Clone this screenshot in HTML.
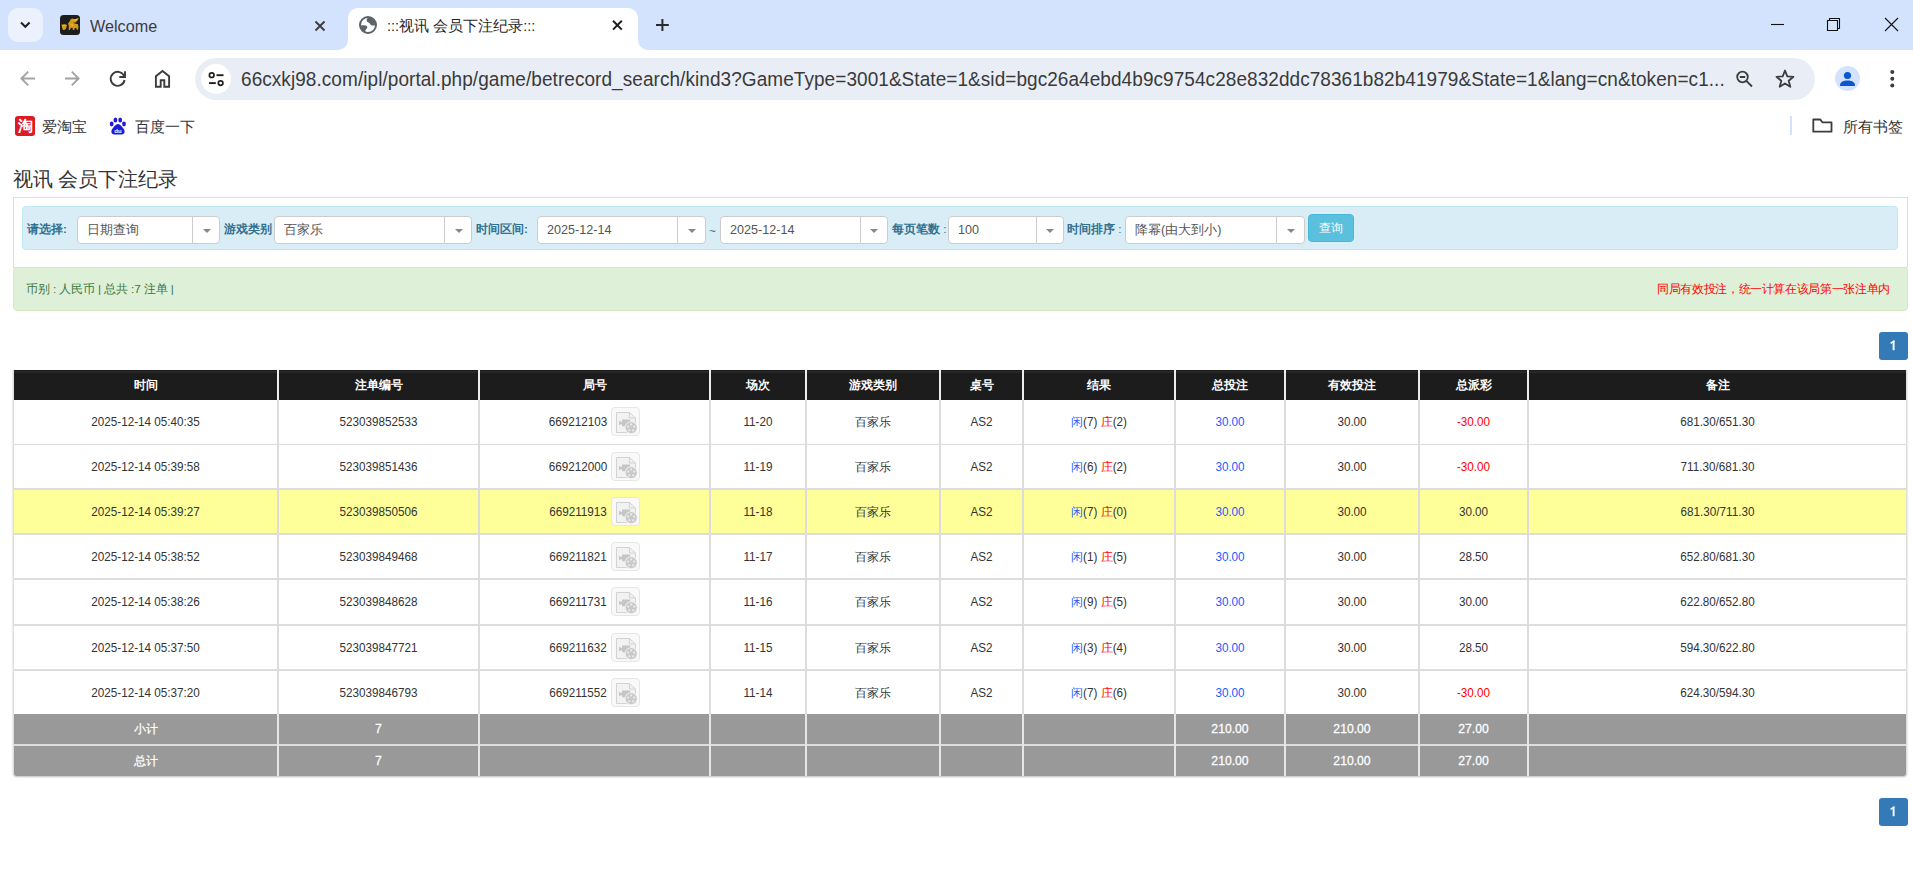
<!DOCTYPE html>
<html><head><meta charset="utf-8">
<style>
*{box-sizing:border-box;margin:0;padding:0}
html,body{width:1913px;height:885px;overflow:hidden;background:#fff;font-family:"Liberation Sans",sans-serif;color:#333}
.abs{position:absolute}
.nw{white-space:nowrap}
/* chrome */
#tabstrip{position:absolute;left:0;top:0;width:1913px;height:50px;background:#d3e3fd}
#ddbtn{position:absolute;left:8px;top:8px;width:35px;height:34px;border-radius:10px;background:#ebf2fe}
#tab2{position:absolute;left:348px;top:8px;width:290px;height:42px;background:#fff;border-radius:10px 10px 0 0}
#tab2:before,#tab2:after{content:"";position:absolute;bottom:0;width:10px;height:10px;background:transparent}
#tab2:before{left:-10px;border-bottom-right-radius:10px;box-shadow:4px 4px 0 4px #fff}
#tab2:after{right:-10px;border-bottom-left-radius:10px;box-shadow:-4px 4px 0 4px #fff}
.tabtxt{position:absolute;top:15px;font-size:15px;line-height:20px;color:#444;white-space:nowrap}
#omni{position:absolute;left:195px;top:58px;width:1620px;height:42px;border-radius:21px;background:#e9eef6}
#tunebg{position:absolute;left:201px;top:64px;width:30px;height:30px;border-radius:15px;background:#fff}
#url{position:absolute;left:241px;top:67px;font-size:19px;line-height:24px;color:#3a3a3a;white-space:nowrap;letter-spacing:0.06px;transform:scaleY(1.09);transform-origin:0 5px}
.bm{position:absolute;top:116.5px;font-size:15px;line-height:20px;color:#333;white-space:nowrap}
/* page */
#title{position:absolute;left:12.5px;top:167px;font-size:20px;line-height:24px;color:#333;white-space:nowrap}
#well{position:absolute;left:13px;top:197px;width:1895px;height:71px;border:1px solid #ddd}
#info{position:absolute;left:22px;top:206px;width:1876px;height:44px;background:#d9edf7;border:1px solid #bce8f1;border-radius:4px}
.lbl{position:absolute;top:222px;font-size:11.7px;line-height:14px;font-weight:bold;color:#31708f;white-space:nowrap}
.sel{position:absolute;top:216px;height:28px;background:#fff;border:1px solid #ccc;border-radius:4px}
.sel .v{position:absolute;left:9px;top:6px;font-size:12.6px;line-height:14px;color:#555;white-space:nowrap}
.sel .dv{position:absolute;top:0;bottom:0;width:1px;background:#ccc}
.sel .ar{position:absolute;top:11.5px;width:0;height:0;border-left:4px solid transparent;border-right:4px solid transparent;border-top:4px solid #888}
#btn{position:absolute;left:1308px;top:214px;width:46px;height:28px;background:#5bc0de;border:1px solid #46b8da;border-radius:4px;color:#fff;font-size:11.7px;line-height:26px;text-align:center}
#succ{position:absolute;left:13px;top:267px;width:1895px;height:44px;background:#dff0d8;border:1px solid #d6e9c6;border-radius:4px}
#succ .l{position:absolute;left:12px;top:14px;font-size:11.7px;letter-spacing:-0.1px;line-height:14px;color:#3c763d;white-space:nowrap}
#succ .r{position:absolute;right:17px;top:13.5px;font-size:11.6px;letter-spacing:-0.35px;line-height:14px;color:#f00;white-space:nowrap}
.pg{position:absolute;left:1879px;width:29px;height:28px;background:#337ab7;border-radius:3px;color:#fff;font-size:12.6px;line-height:27px;text-align:center;-webkit-text-stroke:0.5px #fff}
/* table */
#tbl{position:absolute;left:0;top:0;width:0;height:0}
#tblshadow{position:absolute;left:13px;top:370px;width:1894px;height:406px;box-shadow:0 1px 2px rgba(0,0,0,.25);border-radius:0 0 4px 4px;background:#ddd}
.t{position:absolute;text-align:center;font-size:11.7px;white-space:nowrap;color:#333}
.th{color:#fff;font-weight:bold}
.ts{color:#fff;font-size:12.2px;-webkit-text-stroke:0.25px #fff}
.n{display:inline-block;transform:scaleY(1.1);transform-origin:50% calc(50% + 4px)}
.bl{color:#1a5cff}
.rd{color:#f00}
.vi{display:inline-block;vertical-align:middle;width:29px;height:29px;margin-left:4px;border:1px solid #e6e6e6;border-radius:4px;background:#f9f9f9;position:relative;top:-1px}
.vi svg{position:absolute;left:3px;top:2.5px}
</style></head><body>

<div id="tabstrip"></div>
<div id="ddbtn"></div>
<div id="tab2"></div>
<div id="omni"></div>
<div id="tunebg"></div>
<div class="abs" style="left:1835px;top:66px;width:25px;height:25px;border-radius:13px;background:#d3e3fd"></div>
<div class="abs" style="left:15px;top:116px;width:20px;height:20px;border-radius:3px;background:#dc1b24"></div>
<div class="abs" style="left:15px;top:116px;width:20px;height:20px;color:#fff;font-size:15px;line-height:20px;text-align:center;font-weight:bold">淘</div>
<div class="abs" style="left:1790px;top:116px;width:2px;height:19px;background:#d3e3fd"></div>
<svg class="abs" style="left:0;top:0" width="1913" height="150" viewBox="0 0 1913 150">
<path d="M21 22.5 L25.3 26.8 L29.6 22.5" fill="none" stroke="#1f1f1f" stroke-width="2"/>
<rect x="60" y="15" width="20" height="20" rx="3.5" fill="#1d1d1d"/>
<g fill="#d49a1a">
<path d="M70.5 19.5 L72.5 18.2 L74 19.8 L79 18 L77.5 20.5 L75.5 22.5 L72.5 22.8 L70.8 21.5 Z"/>
<path d="M69.5 21.5 L71 19.5 L72.5 21.5 L74.5 23.5 L77.8 24 L78.5 26.5 L78 29.8 L76.8 29.8 L76.3 27.8 L74.8 28 L74.2 30 L72.8 30 L72.6 27.8 L70.6 28 L70 30 L68.7 30 L68.8 26 L68 23.5 Z"/>
<path d="M61.5 24.5 L66 24.2 L67 25.5 L66 28.5 L64.5 30 L63 30 L62 27.5 Z"/>
</g>
<g fill="#f0c040"><path d="M73 19.5 L78 18.4 L76.5 20.2 L74 20.8 Z"/><path d="M70.5 24 L73.5 24.5 L72.5 26 Z"/><path d="M62.5 25 L65.5 25 L64 26.5 Z"/></g>
<path d="M315.5 21.5 L324.5 30.5 M324.5 21.5 L315.5 30.5" stroke="#3c3c3c" stroke-width="1.9"/>
<circle cx="368" cy="25" r="8" fill="none" stroke="#5f6368" stroke-width="2"/>
<path d="M368.5 17.2 C367 18.5 366.3 19.5 366.8 21 C367.5 22.8 369.5 22.5 370.2 24 C370.8 25.2 372 25.8 374 25.5 L375.9 25 A8 8 0 0 0 368.5 17.2 Z" fill="#5f6368"/>
<path d="M360.1 25.5 L364.5 25.3 C366.3 25.3 367.5 26.3 367.3 27.5 C367.1 28.8 365.8 29.3 365.3 30.5 L365.3 32.3 A8 8 0 0 1 360.1 25.5 Z" fill="#5f6368"/>
<path d="M613 20.8 L621.8 29.6 M621.8 20.8 L613 29.6" stroke="#1f1f1f" stroke-width="2"/>
<path d="M662.4 19 V30.9 M656 25 H668.8" stroke="#2a2a2a" stroke-width="2"/>
<path d="M1771 24.5 H1784" stroke="#111" stroke-width="1.1"/>
<path d="M1827.5 20.5 H1837.5 V30.5 H1827.5 Z" fill="none" stroke="#111" stroke-width="1.1"/>
<path d="M1829.5 20.5 V18.5 H1839.5 V28.5 H1837.5" fill="none" stroke="#111" stroke-width="1.1"/>
<path d="M1885 18 L1898 31 M1898 18 L1885 31" stroke="#111" stroke-width="1.1"/>
<path d="M35 78.5 H21.5 M28.2 71.7 L21.4 78.5 L28.2 85.3" fill="none" stroke="#a3a3a3" stroke-width="1.9"/>
<path d="M65 78.5 H78.5 M71.8 71.7 L78.6 78.5 L71.8 85.3" fill="none" stroke="#a3a3a3" stroke-width="1.9"/>
<path d="M124.3 76.5 A7 7 0 1 0 124.6 80" fill="none" stroke="#3c3c3c" stroke-width="1.9"/>
<path d="M125 71.2 V77 H119.3" fill="none" stroke="#3c3c3c" stroke-width="1.9"/>
<path d="M155.9 86.7 V76.3 L162.5 71 L169.1 76.3 V86.7 H164.3 V80.2 H160.7 V86.7 Z" fill="none" stroke="#3c3c3c" stroke-width="1.9" stroke-linejoin="miter"/>
<circle cx="211.7" cy="75.2" r="2.3" fill="none" stroke="#1f1f1f" stroke-width="1.7"/>
<path d="M216.5 75.2 H223.5" stroke="#1f1f1f" stroke-width="1.9"/>
<circle cx="220.6" cy="83.1" r="2.3" fill="none" stroke="#1f1f1f" stroke-width="1.7"/>
<path d="M209 83.1 H215.8" stroke="#1f1f1f" stroke-width="1.9"/>
<circle cx="1742.5" cy="77" r="5.3" fill="none" stroke="#3c3c3c" stroke-width="1.8"/>
<path d="M1739.8 77 H1745.2 M1746.3 80.8 L1752 86.5" stroke="#3c3c3c" stroke-width="1.9"/>
<path d="M1785 70.5 L1787.3 76.4 L1793.5 76.8 L1788.7 80.8 L1790.3 86.8 L1785 83.4 L1779.7 86.8 L1781.3 80.8 L1776.5 76.8 L1782.7 76.4 Z" fill="none" stroke="#3c3c3c" stroke-width="1.8" stroke-linejoin="round"/>
<circle cx="1847.5" cy="75.5" r="3.6" fill="#0b57d0"/>
<path d="M1840 85.5 C1840 81.8 1844 80.6 1847.5 80.6 C1851 80.6 1855 81.8 1855 85.5 V86 H1840 Z" fill="#0b57d0"/>
<circle cx="1892.3" cy="72" r="2" fill="#3c3c3c"/><circle cx="1892.3" cy="78.8" r="2" fill="#3c3c3c"/><circle cx="1892.3" cy="85.6" r="2" fill="#3c3c3c"/>
<g fill="#2319dc">
<ellipse cx="111.7" cy="124" rx="1.9" ry="2.4"/><ellipse cx="115.4" cy="120" rx="1.9" ry="2.5"/><ellipse cx="120.2" cy="120" rx="1.9" ry="2.5"/><ellipse cx="124" cy="124" rx="1.9" ry="2.4"/>
<path d="M118 124 C115.5 124 114.5 126.5 112.8 128.3 C110.5 130.5 111 134.5 114.2 134.5 H121.8 C125 134.5 125.5 130.5 123.2 128.3 C121.5 126.5 120.5 124 118 124 Z"/>
</g>
<text x="118" y="133" font-size="6" fill="#fff" text-anchor="middle" font-family="Liberation Sans" font-weight="bold">du</text>
<path d="M1813.3 119.5 V131.7 H1831.5 V122.3 H1822.3 L1820.3 119.5 Z" fill="none" stroke="#3c3c3c" stroke-width="1.8" stroke-linejoin="round"/>
</svg>
<div class="tabtxt" style="left:90px;top:15.5px;font-size:16.2px;color:#3c3c3c">Welcome</div>
<div class="tabtxt" style="left:387px;top:16px;font-size:14.6px;color:#1f1f1f">:::视讯 会员下注纪录:::</div>
<div id="url">66cxkj98.com/ipl/portal.php/game/betrecord_search/kind3?GameType=3001&amp;State=1&amp;sid=bgc26a4ebd4b9c9754c28e832ddc78361b82b41979&amp;State=1&amp;lang=cn&amp;token=c1...</div>
<div class="bm" style="left:42px">爱淘宝</div>
<div class="bm" style="left:135px">百度一下</div>
<div class="bm" style="left:1843px">所有书签</div>

<!-- page -->
<div id="title">视讯 会员下注纪录</div>
<div id="well"></div>
<div id="info"></div>
<div class="lbl" style="left:27px">请选择:</div>
<div class="sel" style="left:77px;width:143px"><div class="v">日期查询</div><div class="dv" style="left:114px"></div><div class="ar" style="left:125px"></div></div>
<div class="lbl" style="left:224px">游戏类别</div>
<div class="sel" style="left:274px;width:198px"><div class="v">百家乐</div><div class="dv" style="left:169px"></div><div class="ar" style="left:180px"></div></div>
<div class="lbl" style="left:476px">时间区间:</div>
<div class="sel" style="left:537px;width:169px"><div class="v">2025-12-14</div><div class="dv" style="left:139px"></div><div class="ar" style="left:150px"></div></div>
<div class="lbl" style="left:709px;top:223.5px;font-weight:normal">~</div>
<div class="sel" style="left:720px;width:168px"><div class="v">2025-12-14</div><div class="dv" style="left:139px"></div><div class="ar" style="left:149px"></div></div>
<div class="lbl" style="left:892px">每页笔数<span style="font-weight:normal"> :</span></div>
<div class="sel" style="left:948px;width:116px"><div class="v">100</div><div class="dv" style="left:87px"></div><div class="ar" style="left:97px"></div></div>
<div class="lbl" style="left:1067px">时间排序<span style="font-weight:normal"> :</span></div>
<div class="sel" style="left:1125px;width:180px"><div class="v">降幂(由大到小)</div><div class="dv" style="left:150px"></div><div class="ar" style="left:161px"></div></div>
<div id="btn">查询</div>

<div id="succ"><div class="l">币别 : 人民币 | 总共 :7 注单 |</div><div class="r">同局有效投注，统一计算在该局第一张注单内</div></div>

<div class="pg" style="top:332px"><svg width="29" height="28" viewBox="0 0 29 28" style="position:absolute;left:0;top:0"><path d="M14.6 9 V18.2" stroke="#fff" stroke-width="1.9"/><path d="M15.5 8.6 L11.6 11.3" stroke="#fff" stroke-width="1.5"/></svg></div>

<div id="tblshadow"></div>
<div id="tbl">
<div class="abs" style="left:14px;top:370px;width:1892px;height:30px;background:#1c1c1c;"></div>
<div class="abs" style="left:14px;top:400px;width:1892px;height:44px;background:#fff;"></div>
<div class="abs" style="left:14px;top:445px;width:1892px;height:43px;background:#fff;"></div>
<div class="abs" style="left:14px;top:490px;width:1892px;height:43px;background:#ffff99;"></div>
<div class="abs" style="left:14px;top:535px;width:1892px;height:43px;background:#fff;"></div>
<div class="abs" style="left:14px;top:580px;width:1892px;height:44px;background:#fff;"></div>
<div class="abs" style="left:14px;top:626px;width:1892px;height:43px;background:#fff;"></div>
<div class="abs" style="left:14px;top:671px;width:1892px;height:43px;background:#fff;"></div>
<div class="abs" style="left:14px;top:714px;width:1892px;height:30px;background:#999;"></div>
<div class="abs" style="left:14px;top:746px;width:1892px;height:30px;background:#999;border-radius:0 0 3px 3px;"></div>
<div class="abs" style="left:14px;top:371px;width:1892px;height:2px;background:#262626"></div>
<div class="abs" style="left:277px;top:370px;width:2px;height:30px;background:#ececec"></div>
<div class="abs" style="left:277px;top:400px;width:2px;height:314px;background:#dcdcdc"></div>
<div class="abs" style="left:277px;top:714px;width:2px;height:62px;background:#e6e6e6"></div>
<div class="abs" style="left:478px;top:370px;width:2px;height:30px;background:#ececec"></div>
<div class="abs" style="left:478px;top:400px;width:2px;height:314px;background:#dcdcdc"></div>
<div class="abs" style="left:478px;top:714px;width:2px;height:62px;background:#e6e6e6"></div>
<div class="abs" style="left:709px;top:370px;width:2px;height:30px;background:#ececec"></div>
<div class="abs" style="left:709px;top:400px;width:2px;height:314px;background:#dcdcdc"></div>
<div class="abs" style="left:709px;top:714px;width:2px;height:62px;background:#e6e6e6"></div>
<div class="abs" style="left:805px;top:370px;width:2px;height:30px;background:#ececec"></div>
<div class="abs" style="left:805px;top:400px;width:2px;height:314px;background:#dcdcdc"></div>
<div class="abs" style="left:805px;top:714px;width:2px;height:62px;background:#e6e6e6"></div>
<div class="abs" style="left:939px;top:370px;width:2px;height:30px;background:#ececec"></div>
<div class="abs" style="left:939px;top:400px;width:2px;height:314px;background:#dcdcdc"></div>
<div class="abs" style="left:939px;top:714px;width:2px;height:62px;background:#e6e6e6"></div>
<div class="abs" style="left:1022px;top:370px;width:2px;height:30px;background:#ececec"></div>
<div class="abs" style="left:1022px;top:400px;width:2px;height:314px;background:#dcdcdc"></div>
<div class="abs" style="left:1022px;top:714px;width:2px;height:62px;background:#e6e6e6"></div>
<div class="abs" style="left:1174px;top:370px;width:2px;height:30px;background:#ececec"></div>
<div class="abs" style="left:1174px;top:400px;width:2px;height:314px;background:#dcdcdc"></div>
<div class="abs" style="left:1174px;top:714px;width:2px;height:62px;background:#e6e6e6"></div>
<div class="abs" style="left:1284px;top:370px;width:2px;height:30px;background:#ececec"></div>
<div class="abs" style="left:1284px;top:400px;width:2px;height:314px;background:#dcdcdc"></div>
<div class="abs" style="left:1284px;top:714px;width:2px;height:62px;background:#e6e6e6"></div>
<div class="abs" style="left:1418px;top:370px;width:2px;height:30px;background:#ececec"></div>
<div class="abs" style="left:1418px;top:400px;width:2px;height:314px;background:#dcdcdc"></div>
<div class="abs" style="left:1418px;top:714px;width:2px;height:62px;background:#e6e6e6"></div>
<div class="abs" style="left:1527px;top:370px;width:2px;height:30px;background:#ececec"></div>
<div class="abs" style="left:1527px;top:400px;width:2px;height:314px;background:#dcdcdc"></div>
<div class="abs" style="left:1527px;top:714px;width:2px;height:62px;background:#e6e6e6"></div>
<div class="t th" style="left:14px;width:263px;top:370px;height:30px;line-height:30px">时间</div>
<div class="t th" style="left:279px;width:199px;top:370px;height:30px;line-height:30px">注单编号</div>
<div class="t th" style="left:480px;width:229px;top:370px;height:30px;line-height:30px">局号</div>
<div class="t th" style="left:711px;width:94px;top:370px;height:30px;line-height:30px">场次</div>
<div class="t th" style="left:807px;width:132px;top:370px;height:30px;line-height:30px">游戏类别</div>
<div class="t th" style="left:941px;width:81px;top:370px;height:30px;line-height:30px">桌号</div>
<div class="t th" style="left:1024px;width:150px;top:370px;height:30px;line-height:30px">结果</div>
<div class="t th" style="left:1176px;width:108px;top:370px;height:30px;line-height:30px">总投注</div>
<div class="t th" style="left:1286px;width:132px;top:370px;height:30px;line-height:30px">有效投注</div>
<div class="t th" style="left:1420px;width:107px;top:370px;height:30px;line-height:30px">总派彩</div>
<div class="t th" style="left:1529px;width:377px;top:370px;height:30px;line-height:30px">备注</div>
<div class="t" style="left:14px;width:263px;top:400px;height:44px;line-height:44px"><span class="n">2025-12-14 05:40:35</span></div>
<div class="t" style="left:279px;width:199px;top:400px;height:44px;line-height:44px"><span class="n">523039852533</span></div>
<div class="t" style="left:480px;width:229px;top:400px;height:44px;line-height:44px"><span class="n">669212103</span><span class="vi"><svg width="24" height="24" viewBox="0 0 24 24"><path d="M1.5 1.5 H14.4 L20.5 7 V21.5 H1.5 Z" fill="#f2f2f2" stroke="#d2d2d2" stroke-width="1"/><path d="M14.4 1.5 V7 H20.5" fill="none" stroke="#d2d2d2" stroke-width="1"/><path d="M4 10 L7 11 V13 L4 14 Z M7 8.5 H15.3 V15.3 H7 Z" fill="#c6c6c6"/><circle cx="16.2" cy="16.6" r="6.4" fill="#f2f2f2"/><circle cx="16.2" cy="16.6" r="5.6" fill="#c9c9c9"/><g fill="#ececec"><circle cx="16.2" cy="13.4" r="1.15"/><circle cx="19.2" cy="15.6" r="1.15"/><circle cx="18.1" cy="19.3" r="1.15"/><circle cx="14.3" cy="19.3" r="1.15"/><circle cx="13.2" cy="15.6" r="1.15"/></g></svg></span></div>
<div class="t" style="left:711px;width:94px;top:400px;height:44px;line-height:44px"><span class="n">11-20</span></div>
<div class="t" style="left:807px;width:132px;top:400px;height:44px;line-height:44px">百家乐</div>
<div class="t" style="left:941px;width:81px;top:400px;height:44px;line-height:44px"><span class="n">AS2</span></div>
<div class="t" style="left:1024px;width:150px;top:400px;height:44px;line-height:44px"><span class="bl">闲</span><span class="n">(7)</span> <span class="rd">庄</span><span class="n">(2)</span></div>
<div class="t" style="left:1176px;width:108px;top:400px;height:44px;line-height:44px"><span class="bl"><span class="n">30.00</span></span></div>
<div class="t" style="left:1286px;width:132px;top:400px;height:44px;line-height:44px"><span class="n">30.00</span></div>
<div class="t" style="left:1420px;width:107px;top:400px;height:44px;line-height:44px"><span class="rd"><span class="n">-30.00</span></span></div>
<div class="t" style="left:1529px;width:377px;top:400px;height:44px;line-height:44px"><span class="n">681.30/651.30</span></div>
<div class="t" style="left:14px;width:263px;top:445px;height:43px;line-height:43px"><span class="n">2025-12-14 05:39:58</span></div>
<div class="t" style="left:279px;width:199px;top:445px;height:43px;line-height:43px"><span class="n">523039851436</span></div>
<div class="t" style="left:480px;width:229px;top:445px;height:43px;line-height:43px"><span class="n">669212000</span><span class="vi"><svg width="24" height="24" viewBox="0 0 24 24"><path d="M1.5 1.5 H14.4 L20.5 7 V21.5 H1.5 Z" fill="#f2f2f2" stroke="#d2d2d2" stroke-width="1"/><path d="M14.4 1.5 V7 H20.5" fill="none" stroke="#d2d2d2" stroke-width="1"/><path d="M4 10 L7 11 V13 L4 14 Z M7 8.5 H15.3 V15.3 H7 Z" fill="#c6c6c6"/><circle cx="16.2" cy="16.6" r="6.4" fill="#f2f2f2"/><circle cx="16.2" cy="16.6" r="5.6" fill="#c9c9c9"/><g fill="#ececec"><circle cx="16.2" cy="13.4" r="1.15"/><circle cx="19.2" cy="15.6" r="1.15"/><circle cx="18.1" cy="19.3" r="1.15"/><circle cx="14.3" cy="19.3" r="1.15"/><circle cx="13.2" cy="15.6" r="1.15"/></g></svg></span></div>
<div class="t" style="left:711px;width:94px;top:445px;height:43px;line-height:43px"><span class="n">11-19</span></div>
<div class="t" style="left:807px;width:132px;top:445px;height:43px;line-height:43px">百家乐</div>
<div class="t" style="left:941px;width:81px;top:445px;height:43px;line-height:43px"><span class="n">AS2</span></div>
<div class="t" style="left:1024px;width:150px;top:445px;height:43px;line-height:43px"><span class="bl">闲</span><span class="n">(6)</span> <span class="rd">庄</span><span class="n">(2)</span></div>
<div class="t" style="left:1176px;width:108px;top:445px;height:43px;line-height:43px"><span class="bl"><span class="n">30.00</span></span></div>
<div class="t" style="left:1286px;width:132px;top:445px;height:43px;line-height:43px"><span class="n">30.00</span></div>
<div class="t" style="left:1420px;width:107px;top:445px;height:43px;line-height:43px"><span class="rd"><span class="n">-30.00</span></span></div>
<div class="t" style="left:1529px;width:377px;top:445px;height:43px;line-height:43px"><span class="n">711.30/681.30</span></div>
<div class="t" style="left:14px;width:263px;top:490px;height:43px;line-height:43px"><span class="n">2025-12-14 05:39:27</span></div>
<div class="t" style="left:279px;width:199px;top:490px;height:43px;line-height:43px"><span class="n">523039850506</span></div>
<div class="t" style="left:480px;width:229px;top:490px;height:43px;line-height:43px"><span class="n">669211913</span><span class="vi"><svg width="24" height="24" viewBox="0 0 24 24"><path d="M1.5 1.5 H14.4 L20.5 7 V21.5 H1.5 Z" fill="#f2f2f2" stroke="#d2d2d2" stroke-width="1"/><path d="M14.4 1.5 V7 H20.5" fill="none" stroke="#d2d2d2" stroke-width="1"/><path d="M4 10 L7 11 V13 L4 14 Z M7 8.5 H15.3 V15.3 H7 Z" fill="#c6c6c6"/><circle cx="16.2" cy="16.6" r="6.4" fill="#f2f2f2"/><circle cx="16.2" cy="16.6" r="5.6" fill="#c9c9c9"/><g fill="#ececec"><circle cx="16.2" cy="13.4" r="1.15"/><circle cx="19.2" cy="15.6" r="1.15"/><circle cx="18.1" cy="19.3" r="1.15"/><circle cx="14.3" cy="19.3" r="1.15"/><circle cx="13.2" cy="15.6" r="1.15"/></g></svg></span></div>
<div class="t" style="left:711px;width:94px;top:490px;height:43px;line-height:43px"><span class="n">11-18</span></div>
<div class="t" style="left:807px;width:132px;top:490px;height:43px;line-height:43px">百家乐</div>
<div class="t" style="left:941px;width:81px;top:490px;height:43px;line-height:43px"><span class="n">AS2</span></div>
<div class="t" style="left:1024px;width:150px;top:490px;height:43px;line-height:43px"><span class="bl">闲</span><span class="n">(7)</span> <span class="rd">庄</span><span class="n">(0)</span></div>
<div class="t" style="left:1176px;width:108px;top:490px;height:43px;line-height:43px"><span class="bl"><span class="n">30.00</span></span></div>
<div class="t" style="left:1286px;width:132px;top:490px;height:43px;line-height:43px"><span class="n">30.00</span></div>
<div class="t" style="left:1420px;width:107px;top:490px;height:43px;line-height:43px"><span class="n">30.00</span></div>
<div class="t" style="left:1529px;width:377px;top:490px;height:43px;line-height:43px"><span class="n">681.30/711.30</span></div>
<div class="t" style="left:14px;width:263px;top:535px;height:43px;line-height:43px"><span class="n">2025-12-14 05:38:52</span></div>
<div class="t" style="left:279px;width:199px;top:535px;height:43px;line-height:43px"><span class="n">523039849468</span></div>
<div class="t" style="left:480px;width:229px;top:535px;height:43px;line-height:43px"><span class="n">669211821</span><span class="vi"><svg width="24" height="24" viewBox="0 0 24 24"><path d="M1.5 1.5 H14.4 L20.5 7 V21.5 H1.5 Z" fill="#f2f2f2" stroke="#d2d2d2" stroke-width="1"/><path d="M14.4 1.5 V7 H20.5" fill="none" stroke="#d2d2d2" stroke-width="1"/><path d="M4 10 L7 11 V13 L4 14 Z M7 8.5 H15.3 V15.3 H7 Z" fill="#c6c6c6"/><circle cx="16.2" cy="16.6" r="6.4" fill="#f2f2f2"/><circle cx="16.2" cy="16.6" r="5.6" fill="#c9c9c9"/><g fill="#ececec"><circle cx="16.2" cy="13.4" r="1.15"/><circle cx="19.2" cy="15.6" r="1.15"/><circle cx="18.1" cy="19.3" r="1.15"/><circle cx="14.3" cy="19.3" r="1.15"/><circle cx="13.2" cy="15.6" r="1.15"/></g></svg></span></div>
<div class="t" style="left:711px;width:94px;top:535px;height:43px;line-height:43px"><span class="n">11-17</span></div>
<div class="t" style="left:807px;width:132px;top:535px;height:43px;line-height:43px">百家乐</div>
<div class="t" style="left:941px;width:81px;top:535px;height:43px;line-height:43px"><span class="n">AS2</span></div>
<div class="t" style="left:1024px;width:150px;top:535px;height:43px;line-height:43px"><span class="bl">闲</span><span class="n">(1)</span> <span class="rd">庄</span><span class="n">(5)</span></div>
<div class="t" style="left:1176px;width:108px;top:535px;height:43px;line-height:43px"><span class="bl"><span class="n">30.00</span></span></div>
<div class="t" style="left:1286px;width:132px;top:535px;height:43px;line-height:43px"><span class="n">30.00</span></div>
<div class="t" style="left:1420px;width:107px;top:535px;height:43px;line-height:43px"><span class="n">28.50</span></div>
<div class="t" style="left:1529px;width:377px;top:535px;height:43px;line-height:43px"><span class="n">652.80/681.30</span></div>
<div class="t" style="left:14px;width:263px;top:580px;height:44px;line-height:44px"><span class="n">2025-12-14 05:38:26</span></div>
<div class="t" style="left:279px;width:199px;top:580px;height:44px;line-height:44px"><span class="n">523039848628</span></div>
<div class="t" style="left:480px;width:229px;top:580px;height:44px;line-height:44px"><span class="n">669211731</span><span class="vi"><svg width="24" height="24" viewBox="0 0 24 24"><path d="M1.5 1.5 H14.4 L20.5 7 V21.5 H1.5 Z" fill="#f2f2f2" stroke="#d2d2d2" stroke-width="1"/><path d="M14.4 1.5 V7 H20.5" fill="none" stroke="#d2d2d2" stroke-width="1"/><path d="M4 10 L7 11 V13 L4 14 Z M7 8.5 H15.3 V15.3 H7 Z" fill="#c6c6c6"/><circle cx="16.2" cy="16.6" r="6.4" fill="#f2f2f2"/><circle cx="16.2" cy="16.6" r="5.6" fill="#c9c9c9"/><g fill="#ececec"><circle cx="16.2" cy="13.4" r="1.15"/><circle cx="19.2" cy="15.6" r="1.15"/><circle cx="18.1" cy="19.3" r="1.15"/><circle cx="14.3" cy="19.3" r="1.15"/><circle cx="13.2" cy="15.6" r="1.15"/></g></svg></span></div>
<div class="t" style="left:711px;width:94px;top:580px;height:44px;line-height:44px"><span class="n">11-16</span></div>
<div class="t" style="left:807px;width:132px;top:580px;height:44px;line-height:44px">百家乐</div>
<div class="t" style="left:941px;width:81px;top:580px;height:44px;line-height:44px"><span class="n">AS2</span></div>
<div class="t" style="left:1024px;width:150px;top:580px;height:44px;line-height:44px"><span class="bl">闲</span><span class="n">(9)</span> <span class="rd">庄</span><span class="n">(5)</span></div>
<div class="t" style="left:1176px;width:108px;top:580px;height:44px;line-height:44px"><span class="bl"><span class="n">30.00</span></span></div>
<div class="t" style="left:1286px;width:132px;top:580px;height:44px;line-height:44px"><span class="n">30.00</span></div>
<div class="t" style="left:1420px;width:107px;top:580px;height:44px;line-height:44px"><span class="n">30.00</span></div>
<div class="t" style="left:1529px;width:377px;top:580px;height:44px;line-height:44px"><span class="n">622.80/652.80</span></div>
<div class="t" style="left:14px;width:263px;top:626px;height:43px;line-height:43px"><span class="n">2025-12-14 05:37:50</span></div>
<div class="t" style="left:279px;width:199px;top:626px;height:43px;line-height:43px"><span class="n">523039847721</span></div>
<div class="t" style="left:480px;width:229px;top:626px;height:43px;line-height:43px"><span class="n">669211632</span><span class="vi"><svg width="24" height="24" viewBox="0 0 24 24"><path d="M1.5 1.5 H14.4 L20.5 7 V21.5 H1.5 Z" fill="#f2f2f2" stroke="#d2d2d2" stroke-width="1"/><path d="M14.4 1.5 V7 H20.5" fill="none" stroke="#d2d2d2" stroke-width="1"/><path d="M4 10 L7 11 V13 L4 14 Z M7 8.5 H15.3 V15.3 H7 Z" fill="#c6c6c6"/><circle cx="16.2" cy="16.6" r="6.4" fill="#f2f2f2"/><circle cx="16.2" cy="16.6" r="5.6" fill="#c9c9c9"/><g fill="#ececec"><circle cx="16.2" cy="13.4" r="1.15"/><circle cx="19.2" cy="15.6" r="1.15"/><circle cx="18.1" cy="19.3" r="1.15"/><circle cx="14.3" cy="19.3" r="1.15"/><circle cx="13.2" cy="15.6" r="1.15"/></g></svg></span></div>
<div class="t" style="left:711px;width:94px;top:626px;height:43px;line-height:43px"><span class="n">11-15</span></div>
<div class="t" style="left:807px;width:132px;top:626px;height:43px;line-height:43px">百家乐</div>
<div class="t" style="left:941px;width:81px;top:626px;height:43px;line-height:43px"><span class="n">AS2</span></div>
<div class="t" style="left:1024px;width:150px;top:626px;height:43px;line-height:43px"><span class="bl">闲</span><span class="n">(3)</span> <span class="rd">庄</span><span class="n">(4)</span></div>
<div class="t" style="left:1176px;width:108px;top:626px;height:43px;line-height:43px"><span class="bl"><span class="n">30.00</span></span></div>
<div class="t" style="left:1286px;width:132px;top:626px;height:43px;line-height:43px"><span class="n">30.00</span></div>
<div class="t" style="left:1420px;width:107px;top:626px;height:43px;line-height:43px"><span class="n">28.50</span></div>
<div class="t" style="left:1529px;width:377px;top:626px;height:43px;line-height:43px"><span class="n">594.30/622.80</span></div>
<div class="t" style="left:14px;width:263px;top:671px;height:43px;line-height:43px"><span class="n">2025-12-14 05:37:20</span></div>
<div class="t" style="left:279px;width:199px;top:671px;height:43px;line-height:43px"><span class="n">523039846793</span></div>
<div class="t" style="left:480px;width:229px;top:671px;height:43px;line-height:43px"><span class="n">669211552</span><span class="vi"><svg width="24" height="24" viewBox="0 0 24 24"><path d="M1.5 1.5 H14.4 L20.5 7 V21.5 H1.5 Z" fill="#f2f2f2" stroke="#d2d2d2" stroke-width="1"/><path d="M14.4 1.5 V7 H20.5" fill="none" stroke="#d2d2d2" stroke-width="1"/><path d="M4 10 L7 11 V13 L4 14 Z M7 8.5 H15.3 V15.3 H7 Z" fill="#c6c6c6"/><circle cx="16.2" cy="16.6" r="6.4" fill="#f2f2f2"/><circle cx="16.2" cy="16.6" r="5.6" fill="#c9c9c9"/><g fill="#ececec"><circle cx="16.2" cy="13.4" r="1.15"/><circle cx="19.2" cy="15.6" r="1.15"/><circle cx="18.1" cy="19.3" r="1.15"/><circle cx="14.3" cy="19.3" r="1.15"/><circle cx="13.2" cy="15.6" r="1.15"/></g></svg></span></div>
<div class="t" style="left:711px;width:94px;top:671px;height:43px;line-height:43px"><span class="n">11-14</span></div>
<div class="t" style="left:807px;width:132px;top:671px;height:43px;line-height:43px">百家乐</div>
<div class="t" style="left:941px;width:81px;top:671px;height:43px;line-height:43px"><span class="n">AS2</span></div>
<div class="t" style="left:1024px;width:150px;top:671px;height:43px;line-height:43px"><span class="bl">闲</span><span class="n">(7)</span> <span class="rd">庄</span><span class="n">(6)</span></div>
<div class="t" style="left:1176px;width:108px;top:671px;height:43px;line-height:43px"><span class="bl"><span class="n">30.00</span></span></div>
<div class="t" style="left:1286px;width:132px;top:671px;height:43px;line-height:43px"><span class="n">30.00</span></div>
<div class="t" style="left:1420px;width:107px;top:671px;height:43px;line-height:43px"><span class="rd"><span class="n">-30.00</span></span></div>
<div class="t" style="left:1529px;width:377px;top:671px;height:43px;line-height:43px"><span class="n">624.30/594.30</span></div>
<div class="t ts" style="left:14px;width:263px;top:714px;height:30px;line-height:30px">小计</div>
<div class="t ts" style="left:279px;width:199px;top:714px;height:30px;line-height:30px"><span class="n">7</span></div>
<div class="t ts" style="left:1176px;width:108px;top:714px;height:30px;line-height:30px"><span class="n">210.00</span></div>
<div class="t ts" style="left:1286px;width:132px;top:714px;height:30px;line-height:30px"><span class="n">210.00</span></div>
<div class="t ts" style="left:1420px;width:107px;top:714px;height:30px;line-height:30px"><span class="n">27.00</span></div>
<div class="t ts" style="left:14px;width:263px;top:746px;height:30px;line-height:30px">总计</div>
<div class="t ts" style="left:279px;width:199px;top:746px;height:30px;line-height:30px"><span class="n">7</span></div>
<div class="t ts" style="left:1176px;width:108px;top:746px;height:30px;line-height:30px"><span class="n">210.00</span></div>
<div class="t ts" style="left:1286px;width:132px;top:746px;height:30px;line-height:30px"><span class="n">210.00</span></div>
<div class="t ts" style="left:1420px;width:107px;top:746px;height:30px;line-height:30px"><span class="n">27.00</span></div>
</div>

<div class="pg" style="top:798px"><svg width="29" height="28" viewBox="0 0 29 28" style="position:absolute;left:0;top:0"><path d="M14.6 9 V18.2" stroke="#fff" stroke-width="1.9"/><path d="M15.5 8.6 L11.6 11.3" stroke="#fff" stroke-width="1.5"/></svg></div>

</body></html>
